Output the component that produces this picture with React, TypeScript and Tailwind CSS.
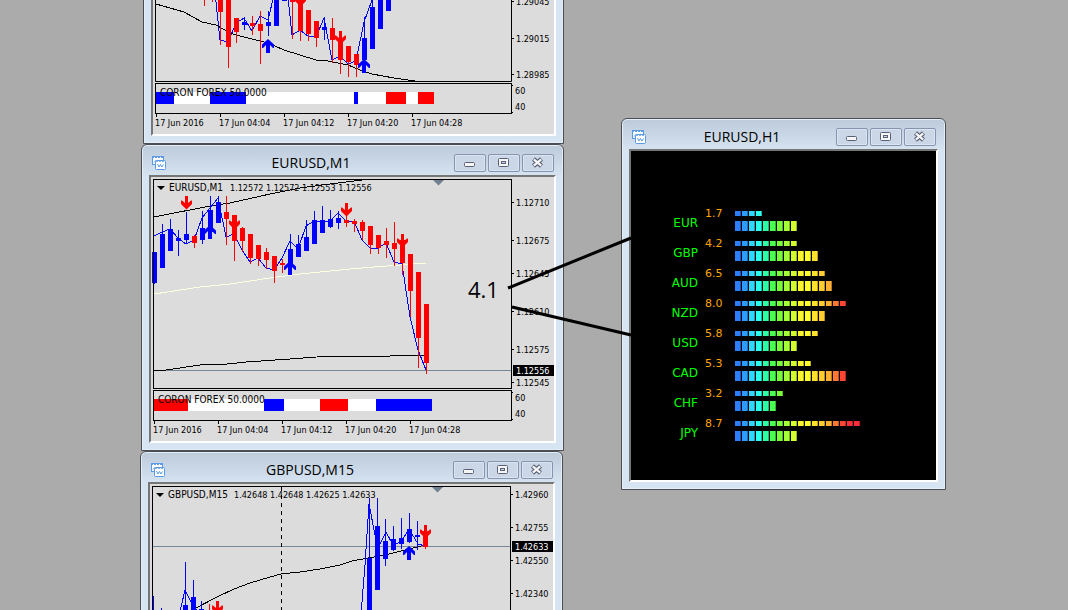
import type { ReactNode } from "react";

type Candle = [x: number, high: number, top: number, bottom: number, low: number, color: "b" | "r"];
type Point = [number, number];

const BLUE = "#0000ff";
const RED = "#ff0000";

const path = (points: Point[]) => points.map(([x, y]) => `${x},${y}`).join(" ");

function ChartIcon() {
  return (
    <svg width="14" height="14" viewBox="0 0 14 14" className="mt-0.5" aria-hidden="true">
      <rect x="0.5" y="0.5" width="11" height="8" fill="#fff" stroke="#5a9ae6" />
      <path d="M0 1H12" stroke="#5a9ae6" strokeDasharray="2 1" strokeWidth="2" />
      <path d="M2 6.5L4 4.5L5.500 6L7 4.5" fill="none" stroke="#5a9ae6" />
      <rect x="3.5" y="4.5" width="10" height="9" rx="1" fill="#fff" stroke="#5a9ae6" />
      <path d="M4 5.500H13" stroke="#7fb2ee" strokeDasharray="2 1" />
      <path d="M5.500 8L7 11L8.500 8.500L10 11L11.500 8.500" fill="none" stroke="#5a9ae6" />
    </svg>
  );
}

function FrameButton({ label, children }: { label: string; children: ReactNode }) {
  return (
    <button
      type="button"
      aria-label={label}
      className="flex h-[18px] w-8 items-center justify-center rounded-xs border border-[#8794b0] bg-[#cbd7e6] pr-px pb-px shadow-[inset_0_0_0_1px_#dbe5f1]"
    >
      {children}
    </button>
  );
}

function FrameButtons() {
  return (
    <div className="flex gap-0.5">
      <FrameButton label="Minimize">
        <svg width="12" height="11" viewBox="0 0 12 11">
          <rect x="0.5" y="5.5" width="10" height="4" rx="1" fill="#f6f6f6" stroke="#596076" />
        </svg>
      </FrameButton>
      <FrameButton label="Restore">
        <svg width="11" height="9" viewBox="0 0 11 9">
          <rect x="0.5" y="0.5" width="10" height="8" rx="1" fill="#f6f6f6" stroke="#596076" />
          <rect x="3.5" y="3.5" width="4" height="2" fill="#cbd7e6" stroke="#596076" />
        </svg>
      </FrameButton>
      <FrameButton label="Close">
        <svg width="13" height="11" viewBox="0 0 13 11">
          <path d="M2.5 2L10.5 9M10.5 2L2.5 9" stroke="#596076" strokeWidth="4.4" />
          <path d="M2.8 2.3L10.2 8.7M10.2 2.3L2.8 8.7" stroke="#f6f6f6" strokeWidth="2.2" />
        </svg>
      </FrameButton>
    </div>
  );
}

function ChartWindow({ title, place, children }: { title?: string; place: string; children: ReactNode }) {
  return (
    <section
      className={`absolute flex flex-col rounded-t-md border border-[#4b4d52] bg-[#d7e4f2] bg-linear-to-b from-[#bccada] to-[#d7e4f2] to-[32px] px-[7px] pb-[7px] shadow-[inset_0_0_0_1px_#e4eef8] ${place}`}
    >
      <header className="flex h-[30px] shrink-0 items-start justify-between pt-[9px] pr-0.5 pl-[3px]">
        {title && (
          <>
            <ChartIcon />
            <h2 className="flex-1 pl-0.5 text-center font-['Open_Sans',sans-serif] text-sm leading-[18px] text-black">{title}</h2>
            <FrameButtons />
          </>
        )}
      </header>
      <div className="min-h-0 flex-1 overflow-hidden border-2 border-t-[#767676] border-r-white border-b-white border-l-[#767676] bg-[#dcdcdc]">
        {children}
      </div>
    </section>
  );
}

function Candles({ data }: { data: Candle[] }) {
  return (
    <g shapeRendering="crispEdges">
      {data.map(([x, high, top, bottom, low, color]) => (
        <g key={x} fill={color === "b" ? BLUE : RED}>
          <rect x={x} y={high} width="1" height={low - high} />
          <rect x={x - 2} y={top} width="5" height={bottom - top} />
        </g>
      ))}
    </g>
  );
}

function Line({ points, color = "#000", dash }: { points: Point[]; color?: string; dash?: string }) {
  return (
    <polyline
      points={path(points)}
      fill="none"
      stroke={color}
      strokeDasharray={dash}
      shapeRendering="crispEdges"
    />
  );
}

function Arrow({ x, y, down }: { x: number; y: number; down?: boolean }) {
  return down ? (
    <path
      d={`M${x - 1} ${y}h3v7l3 -2.5h1v3.5l-5.5 5.5l-5.5 -5.5v-3.5h1l3 2.5z`}
      fill={RED}
    />
  ) : (
    <path
      d={`M${x - 2} ${y + 14}h4v-8l3 3h1v-3.5l-6 -5.5l-6 5.5v3.5h1l3 -3z`}
      fill={BLUE}
    />
  );
}

function PriceAxis({ x, prices }: { x: number; prices: [string, number][] }) {
  return (
    <>
      {prices.map(([label, y]) => (
        <g key={label}>
          <rect x={x} y={y} width="3" height="1" />
          <text x={x + 5} y={y + 4}>{label}</text>
        </g>
      ))}
    </>
  );
}

function CurrentPrice({ x, y, price }: { x: number; y: number; price: string }) {
  return (
    <>
      <rect x={x} y={y - 5} width="41" height="11" />
      <text x={x + 3} y={y + 4} fill="#fff">{price}</text>
    </>
  );
}

const TIMES = ["17 Jun 2016", "17 Jun 04:04", "17 Jun 04:12", "17 Jun 04:20", "17 Jun 04:28"];

/* Indicator strip under a chart: x is its left edge, y its top edge. */
function Indicator({ x, y, right, bands }: { x: number; y: number; right: number; bands: [number, number, string][] }) {
  return (
    <g>
      {bands.map(([from, to, color]) => (
        <rect key={from} x={from} y={y + 9} width={to - from} height="12" fill={color} shapeRendering="crispEdges" />
      ))}
      <rect x={x + 0.5} y={y + 0.5} width={right - x} height="30" fill="none" stroke="#000" />
      <text x={x + 5} y={y + 13} className="text-[10px]">CORON FOREX 50.0000</text>
      <text x={right + 4} y={y + 11}>60</text>
      <text x={right + 4} y={y + 27}>40</text>
      <rect x={right} y={y + 2} width="2" height="1" />
      <rect x={right} y={y + 29} width="2" height="1" />
      {TIMES.map((time, i) => (
        <g key={time}>
          <rect x={x + 1 + i * 64} y={y + 31} width="1" height="3" />
          <text x={x + i * 64} y={y + 43}>{time}</text>
        </g>
      ))}
    </g>
  );
}

function Plot({ viewBox, label, children }: { viewBox: string; label: string; children: ReactNode }) {
  return (
    <svg
      viewBox={viewBox}
      preserveAspectRatio="xMinYMin slice"
      role="img"
      aria-label={label}
      className="block h-full w-full font-['DejaVu_Sans_Condensed','DejaVu_Sans',sans-serif] text-[9px]"
    >
      {children}
    </svg>
  );
}

const topCandles: Candle[] = [
  [204, -9, -9, -4, 6, "r"], [212, -9, -9, -4, 2, "r"], [220, -9, -9, 12, 45, "r"], [228, -9, -9, 47, 68, "r"],
  [236, 18, 18, 32, 43, "r"], [244, 17, 22, 25, 30, "b"], [252, 16, 23, 26, 35, "r"], [260, 11, 24, 31, 64, "r"],
  [268, 11, 22, 26, 36, "b"], [276, -9, -9, 26, 26, "b"], [284, -9, -9, 1, 1, "b"], [292, -9, -9, 2, 39, "r"],
  [300, -9, -9, 31, 41, "r"], [308, 10, 10, 34, 41, "r"], [316, 21, 21, 38, 47, "r"], [324, 17, 27, 30, 40, "b"],
  [332, 18, 28, 40, 63, "r"], [340, 36, 40, 60, 74, "r"], [348, 46, 46, 62, 77, "r"], [356, 54, 54, 65, 77, "r"],
  [364, 17, 38, 60, 71, "b"], [372, 0, 7, 49, 49, "b"], [380, -9, -9, 29, 29, "b"], [388, -9, -9, 11, 11, "b"],
];
const topFast: Point[] = [
  [212, -9], [216, 2], [220, 40], [228, 42], [236, 23], [244, 18], [252, 31], [260, 16], [268, 20], [275, -9],
  [288, -3], [292, 35], [300, 30], [308, 36], [316, 37], [324, 18], [332, 60], [340, 56], [348, 64], [356, 61],
  [364, 22], [372, 0],
];
const topSlow: Point[] = [
  [156, 4], [184, 12], [202, 22], [216, 25], [230, 33], [240, 36], [268, 43], [284, 50], [300, 55], [316, 60],
  [328, 61], [348, 65], [360, 70], [372, 74], [394, 78], [415, 81],
];

function TopChart() {
  return (
    <Plot viewBox="153 -14 402 148" label="M1 price chart">
      <Line points={topFast} color={BLUE} />
      <Line points={topSlow} />
      <Candles data={topCandles} />
      <Arrow x={268} y={39} />
      <Arrow x={300} y={-7} down />
      <Arrow x={340} y={31} down />
      <Arrow x={364} y={59} />
      <path d="M155.500 -14V81.500H511.500V-14" fill="none" stroke="#000" />
      <PriceAxis x={511} prices={[["1.29045", 1], ["1.29015", 38], ["1.28985", 74]]} />
      <Indicator
        x={155}
        y={83}
        right={511}
        bands={[
          [155, 174, BLUE], [174, 210, "#fff"], [210, 246, BLUE], [246, 354, "#fff"], [354, 358, BLUE],
          [358, 386, "#fff"], [386, 406, RED], [406, 418, "#fff"], [418, 434, RED],
        ]}
      />
    </Plot>
  );
}

const midCandles: Candle[] = [
  [154, 252, 252, 283, 284, "b"], [162, 224, 234, 268, 268, "b"], [170, 219, 229, 251, 251, "b"],
  [178, 230, 238, 241, 256, "b"], [186, 212, 234, 240, 244, "b"], [194, 235, 236, 243, 248, "r"],
  [202, 211, 228, 240, 244, "b"], [210, 196, 210, 232, 239, "b"], [218, 196, 202, 223, 223, "b"],
  [226, 196, 212, 219, 245, "r"], [234, 215, 215, 241, 261, "r"], [242, 227, 228, 241, 252, "r"],
  [250, 234, 234, 258, 264, "r"], [258, 245, 245, 259, 266, "r"], [266, 248, 252, 260, 269, "r"],
  [274, 256, 256, 271, 283, "r"], [282, 259, 263, 265, 273, "r"], [290, 234, 249, 265, 275, "b"],
  [298, 235, 244, 257, 257, "b"], [306, 220, 237, 251, 251, "b"], [314, 211, 220, 244, 244, "b"],
  [322, 206, 220, 233, 233, "b"], [330, 210, 219, 227, 228, "b"], [338, 211, 218, 223, 229, "b"],
  [346, 214, 220, 223, 227, "r"], [354, 219, 221, 224, 232, "r"], [362, 220, 222, 231, 240, "r"],
  [370, 226, 226, 245, 254, "r"], [378, 235, 235, 248, 254, "r"], [386, 228, 241, 245, 258, "r"],
  [394, 222, 243, 249, 266, "r"], [402, 235, 240, 263, 275, "r"], [410, 254, 254, 291, 317, "r"],
  [418, 272, 272, 338, 368, "r"], [426, 304, 304, 363, 374, "r"],
];
const midFast: Point[] = [
  [154, 236], [162, 232], [170, 229], [178, 238], [186, 244], [194, 240], [202, 218], [210, 208], [218, 198],
  [226, 237], [234, 234], [242, 250], [250, 262], [258, 258], [266, 268], [274, 270], [282, 258], [290, 241],
  [298, 249], [306, 226], [314, 221], [330, 221], [338, 213], [346, 221], [354, 221], [362, 240], [370, 248],
  [378, 248], [386, 243], [394, 262], [402, 264], [410, 317], [418, 350], [426, 370],
];

function MiddleChart() {
  return (
    <Plot viewBox="151 177 403 265" label="EURUSD M1 price chart">
      <rect x="154" y="370" width="358" height="1" fill="#778899" />
      <Line
        points={[[154, 294], [200, 287], [230, 284], [270, 278], [300, 274], [350, 269], [374, 267], [400, 265], [426, 263]]}
        color="#ffffe0"
      />
      <Line points={[[154, 217], [210, 206], [230, 203], [270, 194], [280, 192], [300, 188], [330, 184], [362, 180]]} />
      <Line
        points={[[154, 371], [166, 370], [200, 365], [210, 364], [218, 365], [246, 362], [290, 359], [330, 356], [390, 356], [426, 355]]}
      />
      <Line points={midFast} color={BLUE} />
      <Candles data={midCandles} />
      <Arrow x={186} y={196} down />
      <Arrow x={234} y={216} down />
      <Arrow x={346} y={203} down />
      <Arrow x={402} y={234} down />
      <Arrow x={210} y={225} />
      <Arrow x={290} y={261} />
      <path d="M157 186h8l-4 4z" />
      <text x="169" y="191" className="text-[10px]">EURUSD,M1</text>
      <text x="230" y="191">1.12572 1.12572 1.12553 1.12556</text>
      <path d="M433 180h11l-5.500 5.500z" fill="#708090" />
      <rect x="153.500" y="179.500" width="358" height="209" fill="none" stroke="#000" />
      <PriceAxis
        x={511}
        prices={[
          ["1.12710", 202], ["1.12675", 240], ["1.12645", 273], ["1.12610", 311], ["1.12575", 349], ["1.12545", 382],
        ]}
      />
      <CurrentPrice x={513} y={370} price="1.12556" />
      <Indicator
        x={153}
        y={390}
        right={511}
        bands={[
          [154, 188, RED], [188, 264, "#fff"], [264, 284, BLUE], [284, 320, "#fff"], [320, 348, RED],
          [348, 376, "#fff"], [376, 432, BLUE],
        ]}
      />
    </Plot>
  );
}

const lowCandles: Candle[] = [
  [153, 596, 611, 620, 620, "b"], [161, 608, 611, 620, 620, "b"], [185, 562, 605, 620, 620, "b"],
  [193, 580, 597, 620, 620, "b"], [201, 601, 609, 620, 620, "b"], [209, 604, 612, 620, 620, "r"],
  [369, 498, 558, 620, 620, "b"], [377, 498, 526, 590, 590, "b"], [385, 519, 541, 559, 566, "b"],
  [393, 526, 539, 550, 551, "b"], [401, 518, 538, 544, 549, "b"], [409, 513, 529, 542, 543, "b"],
  [417, 521, 535, 537, 550, "b"], [425, 525, 531, 547, 549, "r"],
];

function LowerChart() {
  return (
    <Plot viewBox="150 484 403 265" label="GBPUSD M15 price chart">
      <rect x="153" y="546" width="358" height="1" fill="#778899" />
      <Line points={[[281.5, 487], [281.5, 620]]} dash="4 4" />
      <Line
        points={[
          [196, 608], [217, 597], [234, 589], [250, 583], [270, 577], [281, 574], [300, 572], [320, 569], [340, 565],
          [352, 561], [385, 555], [409, 549], [425, 545],
        ]}
      />
      <Line points={[[178, 620], [185, 590], [190, 600], [198, 612]]} color={BLUE} />
      <Line
        points={[
          [361, 614], [365, 565], [369, 504], [375, 535], [380, 544], [386, 532], [393, 545], [401, 542], [409, 529],
          [418, 544], [425, 546],
        ]}
        color={BLUE}
      />
      <Candles data={lowCandles} />
      <Arrow x={217} y={601} down />
      <Arrow x={425} y={525} down />
      <Arrow x={409} y={546} />
      <path d="M156 493h8l-4 4z" />
      <text x="168" y="498" className="text-[10px]">GBPUSD,M15</text>
      <text x="234" y="498">1.42648 1.42648 1.42625 1.42633</text>
      <path d="M432 487h11l-5.500 5.500z" fill="#708090" />
      <rect x="152.500" y="486.500" width="358" height="209" fill="none" stroke="#000" />
      <PriceAxis x={510} prices={[["1.42960", 494], ["1.42755", 527], ["1.42550", 560], ["1.42340", 593]]} />
      <CurrentPrice x={512} y={546} price="1.42633" />
    </Plot>
  );
}

const SCALE = [
  "#2d7dff", "#2d9bff", "#2dd7ff", "#2dffee", "#2dffa5", "#4bff50", "#78ff37", "#a5ff37", "#d2ff2d",
  "#fff52d", "#ffff2d", "#ffe12d", "#ffcd2d", "#ffaf32", "#ff7832", "#ff4632", "#ff2d37", "#ff2d37",
];

const STRENGTHS = [
  { name: "EUR", value: "1.7", short: 4, long: 9 },
  { name: "GBP", value: "4.2", short: 9, long: 12 },
  { name: "AUD", value: "6.5", short: 13, long: 14 },
  { name: "NZD", value: "8.0", short: 16, long: 13 },
  { name: "USD", value: "5.8", short: 12, long: 9 },
  { name: "CAD", value: "5.3", short: 11, long: 16 },
  { name: "CHF", value: "3.2", short: 7, long: 6 },
  { name: "JPY", value: "8.7", short: 18, long: 9 },
];

function Meter({ count, size }: { count: number; size: string }) {
  return (
    <div className={`flex gap-px ${size}`}>
      {SCALE.slice(0, count).map((color, i) => (
        <span key={i} className="w-1.5 border-r border-black/30" style={{ backgroundColor: color }} />
      ))}
    </div>
  );
}

function StrengthPanel() {
  return (
    <ul className="h-full bg-black pt-[57px] font-['DejaVu_Sans',sans-serif]">
      {STRENGTHS.map((row) => (
        <li key={row.name} className="flex h-[30px] items-start">
          <span className="w-[67px] pt-[7px] text-right text-xs leading-4 text-[#00ff00]">{row.name}</span>
          <span className="ml-[7px] w-[18px] text-[11px] leading-3 text-[#ffa500]">{row.value}</span>
          <div className="ml-3 flex flex-col gap-[5px] pt-[3px]">
            <Meter count={row.short} size="h-[5px]" />
            <Meter count={row.long} size="h-2.5" />
          </div>
        </li>
      ))}
    </ul>
  );
}

export default function App() {
  return (
    <main className="relative h-screen overflow-hidden bg-[#ababab]">
      <ChartWindow place="-top-[47px] left-[143px] h-[191px] w-[421px]">
        <TopChart />
      </ChartWindow>
      <ChartWindow title="EURUSD,M1" place="top-36 left-[141px] h-[307px] w-[423px]">
        <MiddleChart />
      </ChartWindow>
      <ChartWindow title="GBPUSD,M15" place="top-[451px] left-[140px] h-[307px] w-[423px]">
        <LowerChart />
      </ChartWindow>
      <ChartWindow title="EURUSD,H1" place="top-[118px] left-[621px] h-[372px] w-[325px]">
        <StrengthPanel />
      </ChartWindow>

      <span className="absolute top-[277px] left-[468px] font-['Open_Sans',sans-serif] text-[22px] leading-6 text-black">
        4.1
      </span>
      <svg className="absolute top-[230px] left-[500px]" width="140" height="115" viewBox="500 230 140 115" aria-hidden="true">
        <path d="M508 288L631 238M512 307L631 335" stroke="#000" strokeWidth="3" />
      </svg>
    </main>
  );
}
